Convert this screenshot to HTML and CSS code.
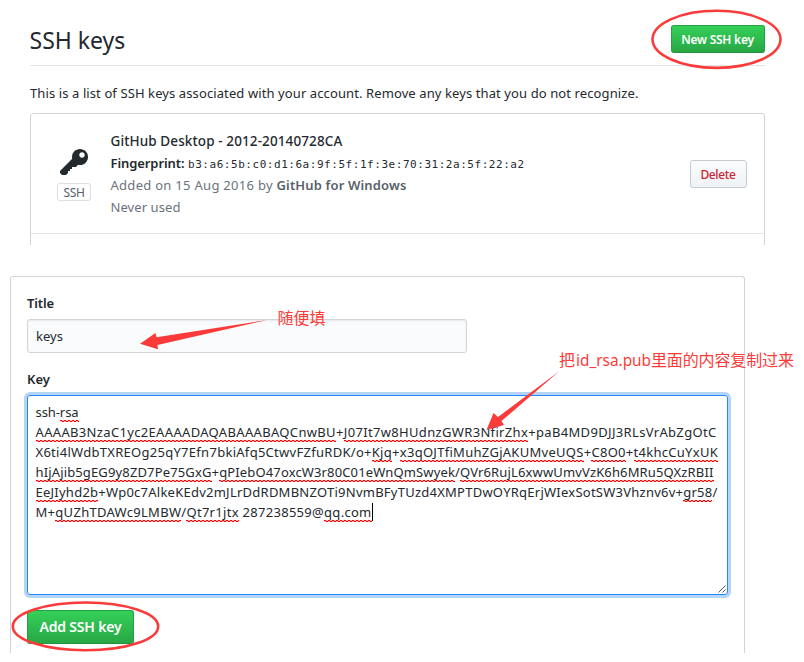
FILE: index.html
```html
<!DOCTYPE html>
<html lang="en">
<head>
<meta charset="utf-8">
<title>SSH keys</title>
<link rel="stylesheet" href="styles.css">
</head>
<body>
<main class="page">
  <section class="keys">
    <header class="keys-head">
      <h1>SSH keys</h1>
      <button class="btn btn-primary btn-sm">New SSH key</button>
    </header>
    <p class="intro">This is a list of SSH keys associated with your account. Remove any keys that you do not recognize.</p>
    <div class="key-list">
      <article class="key-row">
        <div class="key-icon">
          <svg width="28" height="32" viewBox="0 0 14 16"><path fill="#24292e" d="M12.83 2.17C12.08 1.42 11.14 1.03 10 1c-1.13.03-2.08.42-2.83 1.17S6.04 3.86 6.01 5c0 .3.03.59.09.89L0 12v1l1 1h2l1-1v-1h1v-1h1v-1h2l1.09-1.11c.3.08.59.11.91.11 1.14-.03 2.08-.42 2.83-1.17S13.97 6.14 14 5c-.03-1.14-.42-2.08-1.17-2.83zM11 5.38c-.77 0-1.38-.61-1.38-1.38 0-.77.61-1.38 1.38-1.38.77 0 1.38.61 1.38 1.38 0 .77-.61 1.38-1.38 1.38z"/></svg>
          <span class="tag">SSH</span>
        </div>
        <div class="key-info">
          <div class="key-name">GitHub Desktop - 2012-20140728CA</div>
          <div class="key-print"><b>Fingerprint:</b><code>b3:a6:5b:c0:d1:6a:9f:5f:1f:3e:70:31:2a:5f:22:a2</code></div>
          <div class="muted added">Added on 15 Aug 2016 by <b>GitHub for Windows</b></div>
          <div class="muted">Never used</div>
        </div>
        <button class="btn btn-danger btn-sm">Delete</button>
      </article>
    </div>
  </section>

  <section class="new-key">
    <label class="label-title">Title</label>
    <div class="field">keys</div>
    <label>Key</label>
    <div class="textarea">
      <div class="line l1">ssh-<u>rsa</u></div>
      <div class="line l2"><u>AAAAB3NzaC1yc2EAAAADAQABAAABAQCnwBU</u>+<u>J07It7w8HUdnzGWR3NfirZhx</u>+paB4MD9DJJ3RLsVrAbZgOtC</div>
      <div class="line l3">X6ti4lWdbTXREOg25qY7Efn7bkiAfq5CtwvFZfuRDK/o+<u>Kjq</u>+<u>x3qOJTfiMuhZGjAKUMveUQS</u>+<u>C8O0</u>+<u>t4khcCuYxUK</u></div>
      <div class="line l4"><u>hIjAjib5gEG9y8ZD7Pe75GxG</u>+<u>qPIebO47oxcW3r80C01eWnQmSwyek</u>/<u>QVr6RujL6xwwUmvVzK6h6MRu5QXzRBII</u></div>
      <div class="line l5"><u>EeJIyhd2b</u>+Wp0c7AlkeKEdv2mJLrDdRDMBNZOTi9NvmBFyTUzd4XMPTDwOYRqErjWIexSotSW3Vhznv6v+<u>gr58</u>/</div>
      <div class="line l6">M+<u>qUZhTDAWc9LMBW</u>/<u>Qt7r1jtx</u> 287238559@<u>qq.com</u><i class="caret"></i></div>
      <svg class="grip" width="8" height="8" viewBox="0 0 8 8"><path d="M.5 7.5l7-7M4.5 7.5l3-3" stroke="#555" stroke-width="1" fill="none"/></svg>
    </div>
    <button class="btn btn-primary">Add SSH key</button>
  </section>

  <svg class="notes" width="804" height="662" viewBox="0 0 804 662">
    <ellipse cx="716.5" cy="39.3" rx="64" ry="28.6"/>
    <ellipse cx="85.5" cy="626.4" rx="72.7" ry="23.9"/>
    <path d="M140 343.7L155.500 333L156.500 337.300L267 320L157.500 345L158 349.200Z"/>
    <path d="M486.500 430L493.500 413L498 417L559.500 371L501.500 421L504 425Z"/>
    <text x="277.5" y="324" textLength="48">随便填</text>
    <text x="559" y="366">把</text>
    <text x="576" y="366" textLength="75" lengthAdjust="spacingAndGlyphs">id_rsa.pub</text>
    <text x="651" y="366" textLength="143">里面的内容复制过来</text>
  </svg>
</main>
</body>
</html>
```
FILE: styles.css
```css
* { box-sizing: border-box; }

body {
  margin: 0;
  background: #fff;
  color: #24292e;
  font: 13px/20px "Noto Sans", "Noto Sans CJK SC", sans-serif;
}

.page {
  position: relative;
  width: 804px;
  height: 662px;
  overflow: hidden;
}

b, label { font-weight: 600; }

.keys {
  width: 735px;
  height: 245px;
  margin-left: 30px;
  overflow: hidden;
}

.keys-head {
  display: flex;
  justify-content: space-between;
  align-items: flex-start;
  height: 66px;
  padding-top: 25px;
  border-bottom: 1px solid #e1e4e8;
}

h1 {
  margin: -1px 0 0 -0.5px;
  font-size: 23px;
  font-weight: 400;
  line-height: 32px;
}

.btn {
  border: 1px solid #28a745;
  border-radius: 3px;
  padding: 0;
  text-align: center;
  font-family: inherit;
  white-space: nowrap;
}

.btn-primary {
  width: 107px;
  height: 34px;
  padding: 0 0 2px;
  border-color: #279f43 #279f43 #23913c;
  background: linear-gradient(#34d058, #28a745);
  color: #fff;
  font-size: 14px;
  font-weight: 600;
  letter-spacing: -0.18px;
}

.btn-sm {
  height: 28px;
  font-size: 12px;
}

.btn-primary.btn-sm {
  width: 94px;
  padding: 0 1px 0 0;
  letter-spacing: -0.24px;
}

.btn-danger {
  width: 57px;
  padding: 2px 1px 0 0;
  border-color: #c8cbcf;
  background: linear-gradient(#fafbfc, #eff3f6);
  color: #cb2431;
  font-weight: 500;
  letter-spacing: -0.35px;
}

.intro {
  margin: 17px 0 10px;
  letter-spacing: 0.102px;
  white-space: nowrap;
}

.key-list {
  height: 160px;
  border: 1px solid #d1d5da;
  border-radius: 3px;
}

.key-row {
  display: flex;
  align-items: center;
  height: 120px;
  padding: 0 17px 0 26px;
  border-bottom: 1px solid #e1e4e8;
}

.key-icon {
  display: flex;
  flex-direction: column;
  align-items: center;
  gap: 4px;
  width: 34px;
  margin-right: 19.5px;
  padding-top: 1px;
}

.tag {
  width: 34px;
  height: 18px;
  border: 1px solid #dcdee1;
  border-radius: 3px;
  color: #586069;
  font-size: 12px;
  line-height: 17px;
  letter-spacing: -0.3px;
  text-align: center;
}

.key-info {
  flex: 1;
  line-height: 22px;
  white-space: nowrap;
}

.key-name {
  font-size: 13.5px;
  font-weight: 500;
  letter-spacing: 0.11px;
}

.key-print b { letter-spacing: -0.08px; }

.key-print code {
  margin-left: 3.5px;
  font: 11px/1 "DejaVu Sans Mono", monospace;
  letter-spacing: 0.54px;
}

.muted {
  color: #6a737d;
  letter-spacing: 0.08px;
}

.added { letter-spacing: 0.286px; }
.added b { color: #586069; letter-spacing: 0.146px; }

.new-key {
  display: flex;
  flex-direction: column;
  align-items: flex-start;
  width: 735px;
  height: 377px;
  margin: 31px 0 0 10px;
  padding: 16px 16px 0;
  border: 1px solid #d1d5da;
  border-bottom: 0;
  border-radius: 3px 3px 0 0;
}

.label-title { letter-spacing: -0.12px; }

.field {
  width: 440px;
  height: 34px;
  margin: 6px 0 16px;
  padding: 6px 8px;
  border: 1px solid #d1d5da;
  border-radius: 3px;
  background: #fafbfc;
  box-shadow: inset 0 1px 2px rgba(27, 31, 35, 0.075);
}

.textarea {
  position: relative;
  width: 701px;
  height: 200px;
  margin: 6px 0 15px;
  padding: 6px 7.5px;
  border: 1px solid #2188ff;
  border-radius: 3px;
  box-shadow: 0 0 0 3px #b5d4f6;
}

.line { height: 20px; white-space: pre; }
.l1 { letter-spacing: -0.08px; }
.l2 { letter-spacing: 0.335px; }
.l3 { letter-spacing: 0.283px; }
.l4 { letter-spacing: 0.141px; }
.l5 { letter-spacing: 0.244px; }
.l6 { letter-spacing: 0.294px; }

/* Spell-check squiggle: two offset dashed rows over a pale red band */
u {
  padding-bottom: 1px;
  text-decoration: none;
  background-image:
    linear-gradient(90deg, #f00 2px, transparent 2px),
    linear-gradient(90deg, transparent 2px, #f00 2px),
    linear-gradient(#ffb4b4, #ffb4b4);
  background-size: 4px 1px, 4px 1px, 100% 2px;
  background-repeat: repeat-x;
  background-position: left bottom 1px, left bottom, left bottom;
}

.caret {
  display: inline-block;
  width: 1px;
  height: 18px;
  background: #000;
  vertical-align: -4px;
}

.grip {
  position: absolute;
  right: 1px;
  bottom: 1px;
}

.notes {
  position: absolute;
  top: 0;
  left: 0;
  pointer-events: none;
}

.notes ellipse {
  fill: none;
  stroke: #fb3b3a;
  stroke-width: 2.6;
}

.notes path { fill: #fb3b3a; }

.notes text {
  fill: #fb3b3a;
  font: 400 16px "Noto Sans", "Noto Sans CJK SC", sans-serif;
}
```
